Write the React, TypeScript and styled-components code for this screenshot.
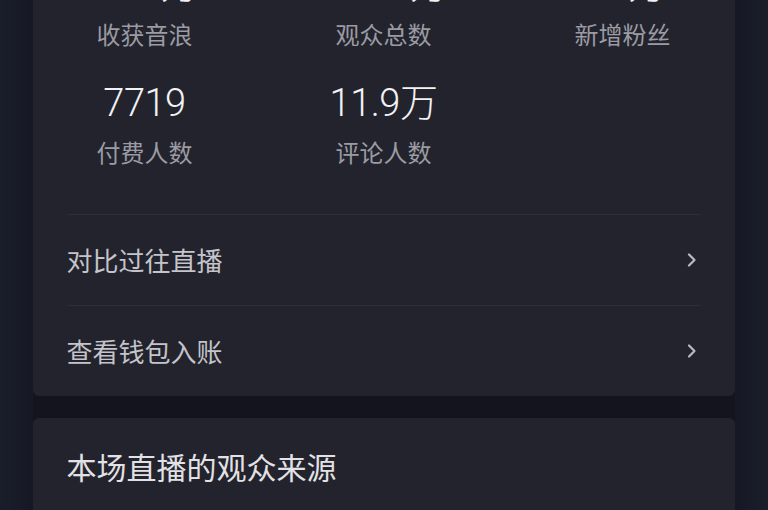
import React from "react";
import styled, { createGlobalStyle } from "styled-components";

const GlobalStyle = createGlobalStyle`
  html, body {
    margin: 0;
    padding: 0;
    background: #181b27;
    overflow: hidden;
  }
  body {
    font-family: "Noto Sans CJK SC", "Noto Sans", sans-serif;
  }
`;

const Page = styled.div`
  width: 768px;
  height: 510px;
  overflow: hidden;
  display: flex;
  justify-content: center;
  align-items: flex-start;
  background: linear-gradient(90deg, #1a1d2a 0%, #161925 4%, #161925 96%, #1a1d2a 100%);
`;

const Column = styled.div`
  flex-shrink: 0;
  width: 702px;
  margin-top: -67px;
  margin-left: -1px;
  display: flex;
  flex-direction: column;
  gap: 22px;
  background: #13141d;
`;

const Card = styled.section<{ $pad?: number }>`
  flex-shrink: 0;
  background: #22232d;
  border-radius: 6px;
  display: flex;
  flex-direction: column;
  padding-top: ${(p) => p.$pad ?? 0}px;
  min-height: 120px;
`;

const StatsGrid = styled.div`
  display: grid;
  grid-template-columns: repeat(3, 239px);
  justify-content: center;
  row-gap: 31px;
  margin: 0 -9px 46px;
`;

const Stat = styled.div`
  display: flex;
  flex-direction: column;
  align-items: center;
`;

const Value = styled.div`
  font-family: "Roboto", "Noto Sans CJK SC", sans-serif;
  font-weight: 300;
  font-size: 38px;
  line-height: 44px;
  color: #f2f2f4;
  letter-spacing: -0.5px;
`;

const Label = styled.div`
  margin-top: 11px;
  font-size: 24px;
  line-height: 32px;
  color: #9b9ba3;
`;

const LinkRow = styled.div`
  flex-shrink: 0;
  height: 91px;
  margin: 0 34px;
  border-top: 1px solid #2d2e39;
  display: flex;
  align-items: center;
  justify-content: space-between;
  padding-right: 3px;
  box-sizing: border-box;
`;

const LinkText = styled.span`
  font-size: 26px;
  line-height: 34px;
  color: #c4c4ca;
`;

const Title = styled.h2`
  margin: 0 0 0 34px;
  font-size: 30px;
  line-height: 40px;
  font-weight: 400;
  color: #e2e2e6;
`;

const Chevron = () => (
  <svg width="12" height="16" viewBox="0 0 12 16" fill="none">
    <path d="M3 2.5 L8.5 8 L3 13.5" stroke="#b9b9c0" strokeWidth="2.2" strokeLinecap="round" strokeLinejoin="round" />
  </svg>
);

const stats = [
  { value: "12.4万", label: "收获音浪" },
  { value: "222.6万", label: "观众总数" },
  { value: "1.2万", label: "新增粉丝" },
  { value: "7719", label: "付费人数" },
  { value: "11.9万", label: "评论人数" },
];

const links = ["对比过往直播", "查看钱包入账"];

export default function App() {
  return (
    <>
      <GlobalStyle />
      <Page>
        <Column>
          <Card $pad={30}>
            <StatsGrid>
              {stats.map((s) => (
                <Stat key={s.label}>
                  <Value>{s.value}</Value>
                  <Label>{s.label}</Label>
                </Stat>
              ))}
            </StatsGrid>
            {links.map((l) => (
              <LinkRow key={l}>
                <LinkText>{l}</LinkText>
                <Chevron />
              </LinkRow>
            ))}
          </Card>
          <Card $pad={28}>
            <Title>本场直播的观众来源</Title>
          </Card>
        </Column>
      </Page>
    </>
  );
}
